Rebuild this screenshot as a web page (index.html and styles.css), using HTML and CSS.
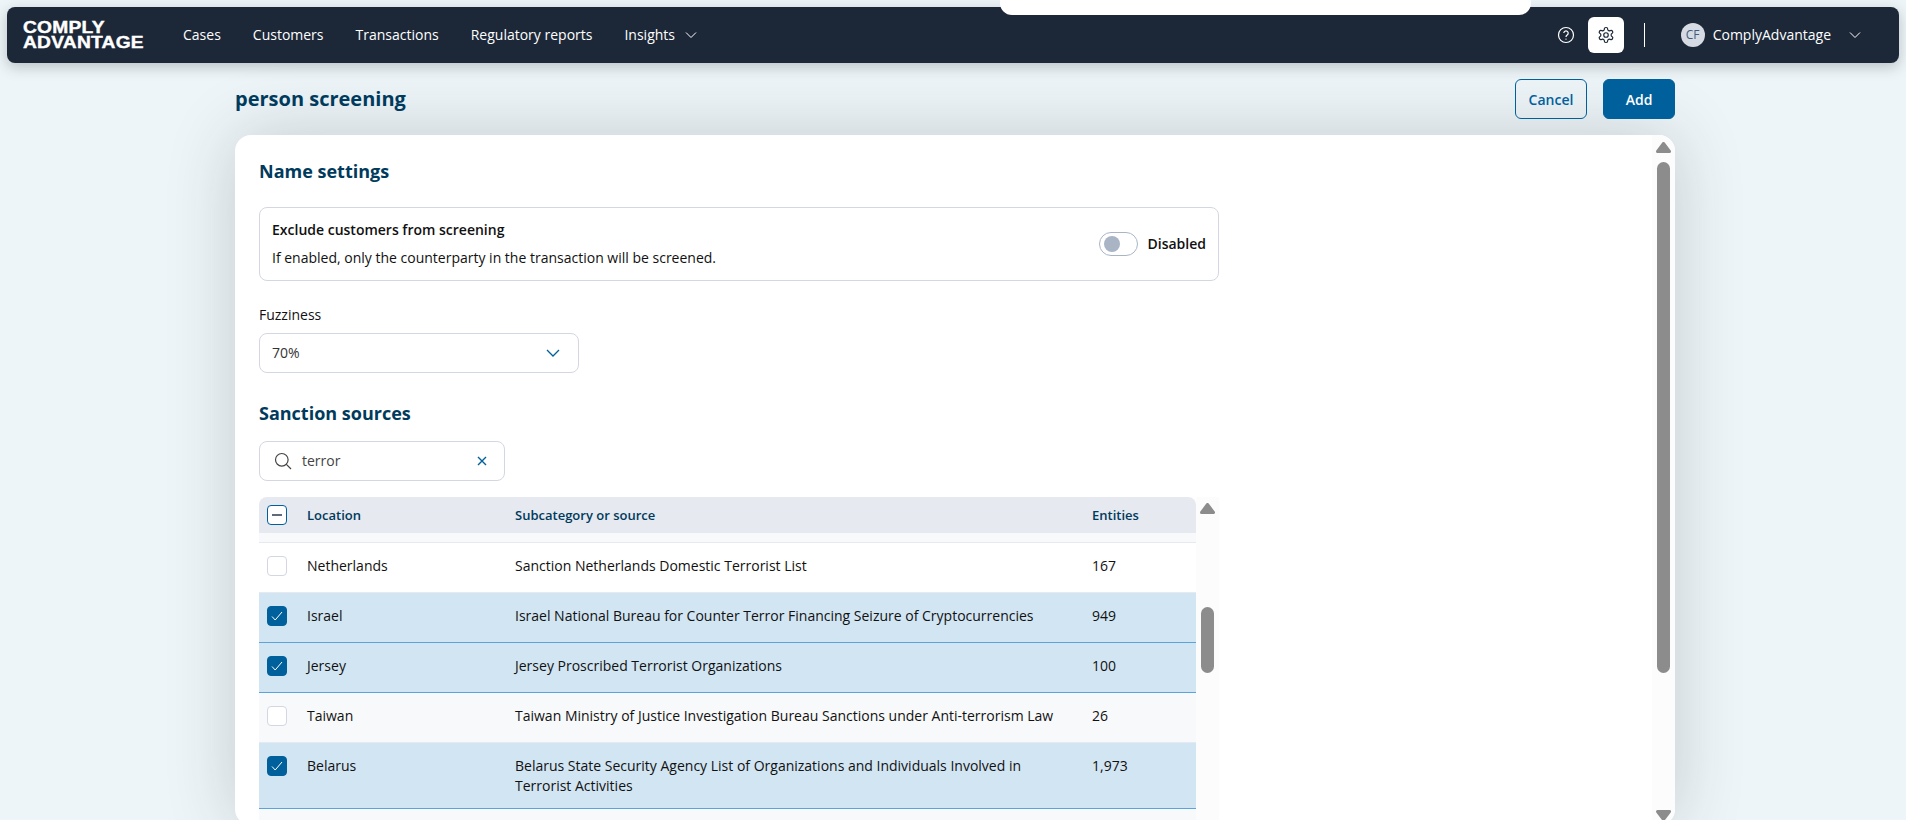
FILE: index.html
```html
<!DOCTYPE html>
<html>
<head>
    <title>person screening</title>
    <link rel="stylesheet" href="styles.css">
</head>
<body>
    <div class="popup"></div>
    <nav class="topbar">
        <div class="logo">COMPLY<br>ADVANTAGE</div>
        <a class="nav-item">Cases</a>
        <a class="nav-item">Customers</a>
        <a class="nav-item">Transactions</a>
        <a class="nav-item">Regulatory reports</a>
        <a class="nav-item">Insights
            <svg class="chevron" viewBox="0 0 12 8"><path d="M1 1.5l5 5 5-5"/></svg>
        </a>
        <div class="topbar-right">
            <svg class="help" viewBox="0 0 18 18">
                <circle cx="9" cy="9" r="7.5"/>
                <path d="M6.8 7.1a2.2 2.2 0 1 1 3.4 1.9c-.8.5-1.2 1-1.2 1.9"/>
                <circle class="dot" cx="9" cy="13.1" r=".7"/>
            </svg>
            <div class="gear-button">
                <svg class="gear" viewBox="0 0 24 24">
                    <path d="M12.22 2h-.44a2 2 0 0 0-2 2v.18a2 2 0 0 1-1 1.73l-.43.25a2 2 0 0 1-2 0l-.15-.08a2 2 0 0 0-2.73.73l-.22.38a2 2 0 0 0 .73 2.73l.15.1a2 2 0 0 1 1 1.72v.51a2 2 0 0 1-1 1.74l-.15.09a2 2 0 0 0-.73 2.73l.22.38a2 2 0 0 0 2.73.73l.15-.08a2 2 0 0 1 2 0l.43.25a2 2 0 0 1 1 1.73V20a2 2 0 0 0 2 2h.44a2 2 0 0 0 2-2v-.18a2 2 0 0 1 1-1.73l.43-.25a2 2 0 0 1 2 0l.15.08a2 2 0 0 0 2.73-.73l.22-.39a2 2 0 0 0-.73-2.73l-.15-.08a2 2 0 0 1-1-1.74v-.5a2 2 0 0 1 1-1.74l.15-.09a2 2 0 0 0 .73-2.73l-.22-.38a2 2 0 0 0-2.73-.73l-.15.08a2 2 0 0 1-2 0l-.43-.25a2 2 0 0 1-1-1.73V4a2 2 0 0 0-2-2z"/>
                    <circle cx="12" cy="12" r="3"/>
                </svg>
            </div>
            <div class="divider"></div>
            <div class="avatar">CF</div>
            <span class="user-name">ComplyAdvantage</span>
            <svg class="chevron user-chevron" viewBox="0 0 12 8"><path d="M1 1.5l5 5 5-5"/></svg>
        </div>
    </nav>

    <main class="page">
        <div class="page-header">
            <h1 class="page-title">person screening</h1>
            <div class="actions">
                <button class="btn btn-outline">Cancel</button>
                <button class="btn btn-primary">Add</button>
            </div>
        </div>

        <section class="card">
            <div class="card-body">
                <h2 class="section-title">Name settings</h2>
                <div class="setting-box">
                    <div>
                        <div class="setting-name">Exclude customers from screening</div>
                        <div class="setting-help">If enabled, only the counterparty in the transaction will be screened.</div>
                    </div>
                    <div class="toggle-wrap">
                        <span class="toggle"><span class="knob"></span></span>
                        <span class="toggle-label">Disabled</span>
                    </div>
                </div>

                <div class="field-label">Fuzziness</div>
                <div class="select">
                    <span>70%</span>
                    <svg class="select-chevron" viewBox="0 0 14 8"><path d="M1 1l6 6 6-6"/></svg>
                </div>

                <h2 class="section-title sources-title">Sanction sources</h2>
                <div class="search">
                    <svg class="search-icon" viewBox="0 0 18 18"><circle cx="7.8" cy="7.8" r="6.3"/><path d="M12.4 12.4l4.6 4.6"/></svg>
                    <span class="search-text">terror</span>
                    <svg class="clear-icon" viewBox="0 0 10 10"><path d="M1 1l8 8M9 1l-8 8"/></svg>
                </div>

                <div class="table-wrap">
                    <table class="sources">
                        <thead>
                            <tr>
                                <th class="col-check"><span class="checkbox mixed"><span class="dash"></span></span></th>
                                <th class="col-location">Location</th>
                                <th class="col-source">Subcategory or source</th>
                                <th>Entities</th>
                            </tr>
                        </thead>
                        <tbody>
                            <tr class="spacer"><td colspan="4"></td></tr>
                            <tr>
                                <td><span class="checkbox"></span></td>
                                <td>Netherlands</td>
                                <td>Sanction Netherlands Domestic Terrorist List</td>
                                <td>167</td>
                            </tr>
                            <tr class="selected">
                                <td><span class="checkbox checked"><svg viewBox="0 0 12 10"><path d="M1 5.5l3.2 3.5L11 1"/></svg></span></td>
                                <td>Israel</td>
                                <td>Israel National Bureau for Counter Terror Financing Seizure of Cryptocurrencies</td>
                                <td>949</td>
                            </tr>
                            <tr class="selected">
                                <td><span class="checkbox checked"><svg viewBox="0 0 12 10"><path d="M1 5.5l3.2 3.5L11 1"/></svg></span></td>
                                <td>Jersey</td>
                                <td>Jersey Proscribed Terrorist Organizations</td>
                                <td>100</td>
                            </tr>
                            <tr class="alt">
                                <td><span class="checkbox"></span></td>
                                <td>Taiwan</td>
                                <td>Taiwan Ministry of Justice Investigation Bureau Sanctions under Anti-terrorism Law</td>
                                <td>26</td>
                            </tr>
                            <tr class="selected">
                                <td><span class="checkbox checked"><svg viewBox="0 0 12 10"><path d="M1 5.5l3.2 3.5L11 1"/></svg></span></td>
                                <td>Belarus</td>
                                <td>Belarus State Security Agency List of Organizations and Individuals Involved in Terrorist Activities</td>
                                <td>1,973</td>
                            </tr>
                            <tr class="alt"><td colspan="4"></td></tr>
                        </tbody>
                    </table>
                    <div class="scrollbar inner-scrollbar">
                        <svg class="arrow" viewBox="0 0 15 11"><path d="M7.5 1.5L13.5 9.5H1.5z"/></svg>
                        <span class="thumb"></span>
                    </div>
                </div>
            </div>
            <div class="scrollbar outer-scrollbar">
                <svg class="arrow" viewBox="0 0 15 11"><path d="M7.5 1.5L13.5 9.5H1.5z"/></svg>
                <span class="thumb"></span>
                <svg class="arrow arrow-down" viewBox="0 0 15 11"><path d="M7.5 9.5L13.5 1.5H1.5z"/></svg>
            </div>
        </section>
    </main>
</body>
</html>
```

FILE: styles.css
```css
* { box-sizing: border-box; }

html, body {
    height: 820px;
    overflow: hidden;
}

body {
    margin: 0;
    background-color: #edf5f9;
    font-family: "Open Sans", "Liberation Sans", sans-serif;
    font-size: 14px;
    line-height: 20px;
    color: #111;
}

svg {
    display: block;
    fill: none;
    stroke: currentColor;
}

/* top bar */
.popup {
    position: absolute;
    top: 0;
    left: 1000px;
    width: 531px;
    height: 15px;
    background-color: #fff;
    border-radius: 0 0 12px 12px;
    z-index: 2;
}

.topbar {
    display: flex;
    align-items: center;
    height: 56px;
    margin: 7px 7px 0;
    padding-left: 16px;
    background-color: #1c2838;
    border-radius: 8px;
    box-shadow: 0 4px 14px rgba(40, 40, 40, 0.25);
    color: #fff;
}

.logo {
    width: 122px;
    margin-right: 38px;
    font-family: "Liberation Sans", sans-serif;
    font-size: 17px;
    font-weight: 700;
    line-height: 15px;
    letter-spacing: 0.2px;
    -webkit-text-stroke: 0.4px #fff;
    transform: scaleX(1.13);
    transform-origin: left center;
}

.nav-item {
    display: flex;
    align-items: center;
    margin-right: 32px;
}

.chevron {
    width: 12px;
    height: 8px;
    margin-left: 10px;
    stroke-width: 1;
}

.topbar-right {
    display: flex;
    align-items: center;
    margin-left: auto;
    padding-right: 38px;
}

.help {
    width: 18px;
    height: 18px;
    margin-right: 13px;
    stroke-width: 1.2;
}

.help .dot {
    fill: #fff;
    stroke: none;
}

.gear-button {
    display: flex;
    align-items: center;
    justify-content: center;
    width: 36px;
    height: 36px;
    background-color: #fff;
    border-radius: 6px;
    color: #1c2838;
}

.gear {
    width: 18px;
    height: 18px;
    stroke-width: 1.6;
}

.divider {
    width: 1px;
    height: 24px;
    margin: 0 36px 0 20px;
    background-color: #fff;
}

.avatar {
    width: 24px;
    height: 24px;
    margin-right: 8px;
    border-radius: 50%;
    background-color: #d6dae3;
    color: #3f5a80;
    font-size: 12px;
    line-height: 24px;
    text-align: center;
}

.user-chevron {
    margin-left: 18px;
}

/* page */
.page {
    width: 1440px;
    margin-left: 235px;
}

.page-header {
    display: flex;
    align-items: center;
    justify-content: space-between;
    height: 40px;
    margin-top: 16px;
    margin-bottom: 16px;
}

.page-title {
    margin: 0;
    font-size: 20px;
    font-weight: 700;
    line-height: 28px;
    color: #003a5c;
}

.actions {
    display: flex;
    gap: 16px;
}

.btn {
    width: 72px;
    height: 40px;
    border-radius: 6px;
    border: 1px solid #00609c;
    font-family: inherit;
    font-size: 14px;
    font-weight: 600;
}

.btn-outline {
    background-color: transparent;
    color: #00609c;
}

.btn-primary {
    background-color: #00609c;
    color: #fff;
}

.card {
    display: flex;
    height: 690px;
    background-color: #fff;
    border-radius: 16px;
    box-shadow: 0 0 70px rgba(40, 40, 40, 0.2);
    overflow: hidden;
}

.card-body {
    flex: 1;
    padding: 24px 0 0 24px;
}

.section-title {
    margin: 0 0 24px;
    font-size: 18px;
    font-weight: 700;
    line-height: 24px;
    color: #003a5c;
}

.sources-title {
    margin: 28px 0 16px;
}

.setting-box {
    display: flex;
    align-items: center;
    justify-content: space-between;
    width: 960px;
    height: 74px;
    padding: 12px;
    border: 1px solid #d3d7e3;
    border-radius: 8px;
}

.setting-name {
    font-weight: 600;
}

.setting-help {
    margin-top: 8px;
}

.toggle-wrap {
    display: flex;
    align-items: center;
    gap: 9px;
}

.toggle {
    display: flex;
    align-items: center;
    width: 39px;
    height: 24px;
    padding-left: 4px;
    border: 1px solid #a9b5c4;
    border-radius: 12px;
}

.knob {
    width: 16px;
    height: 16px;
    border-radius: 50%;
    background-color: #a9b5c4;
}

.toggle-label {
    font-weight: 600;
}

.field-label {
    margin-top: 24px;
    margin-bottom: 8px;
}

.select {
    display: flex;
    align-items: center;
    justify-content: space-between;
    width: 320px;
    height: 40px;
    padding: 0 18px 0 12px;
    border: 1px solid #d3d7e3;
    border-radius: 8px;
    color: #333;
}

.select-chevron {
    width: 14px;
    height: 8px;
    color: #00609c;
    stroke-width: 1.3;
}

.search {
    display: flex;
    align-items: center;
    width: 246px;
    height: 40px;
    padding: 0 17px 0 14px;
    border: 1px solid #d3d7e3;
    border-radius: 8px;
    color: #444;
}

.search-icon {
    width: 18px;
    height: 18px;
    stroke-width: 1.2;
}

.search-text {
    flex: 1;
    margin-left: 10px;
}

.clear-icon {
    width: 10px;
    height: 10px;
    color: #00609c;
    stroke-width: 1.4;
}

/* sources table */
.table-wrap {
    display: flex;
    width: 960px;
    margin-top: 16px;
}

.sources {
    width: 937px;
    height: 340px;
    border-collapse: collapse;
    table-layout: fixed;
}

.sources th {
    height: 36px;
    padding: 0;
    background-color: #e6e9f0;
    font-size: 13px;
    font-weight: 600;
    text-align: left;
    color: #003a5c;
}

.sources th:last-child {
    border-radius: 0 8px 0 0;
}

.sources th:first-child {
    border-radius: 8px 0 0 0;
}

.col-check { width: 48px; }
.col-location { width: 208px; }
.col-source { width: 577px; }

.sources td {
    height: 50px;
    padding: 13px 0 12px;
    vertical-align: top;
    border-top: 1px solid #e6e9f0;
}

.sources td:nth-child(3) {
    padding-right: 27px;
}

.sources .spacer td {
    height: 9px;
    padding: 0;
    background-color: #f8f9fb;
    border-top: 0;
}

.selected td {
    background-color: #d2e5f3;
    border-top-color: #5ca3dc;
}

.alt td {
    background-color: #f8f9fb;
    border-top-color: #5ca3dc;
}

tr:not(.selected) + .selected td {
    border-top-color: #e6e9f0;
}

.checkbox {
    display: flex;
    align-items: center;
    justify-content: center;
    width: 20px;
    height: 20px;
    margin-left: 8px;
    background-color: #fff;
    border: 1px solid #d3d7e3;
    border-radius: 4px;
}

.checkbox.mixed {
    border: 1px solid #00609c;
}

.dash {
    width: 10px;
    height: 2px;
    background-color: #5f6b7a;
}

.checkbox.checked {
    background-color: #00609c;
    border-color: #00609c;
    color: #fff;
}

.checkbox svg {
    width: 12px;
    height: 10px;
    stroke-width: 1;
}

/* scrollbars */
.scrollbar {
    display: flex;
    flex-direction: column;
    align-items: center;
    width: 23px;
    background-color: #fcfcfc;
}

.outer-scrollbar {
    padding-top: 7px;
}

.arrow {
    flex: none;
    width: 15px;
    height: 11px;
    fill: #8c8c8c;
    stroke: #8c8c8c;
    stroke-width: 3;
    stroke-linejoin: round;
}

.arrow-down {
    margin-top: auto;
    margin-bottom: 4px;
}

.thumb {
    width: 13px;
    background-color: #8c8c8c;
    border-radius: 7px;
}

.outer-scrollbar .thumb {
    height: 511px;
    margin-top: 9px;
}

.inner-scrollbar {
    height: 340px;
    padding-top: 6px;
}

.inner-scrollbar .thumb {
    height: 66px;
    margin-top: 93px;
}
```
